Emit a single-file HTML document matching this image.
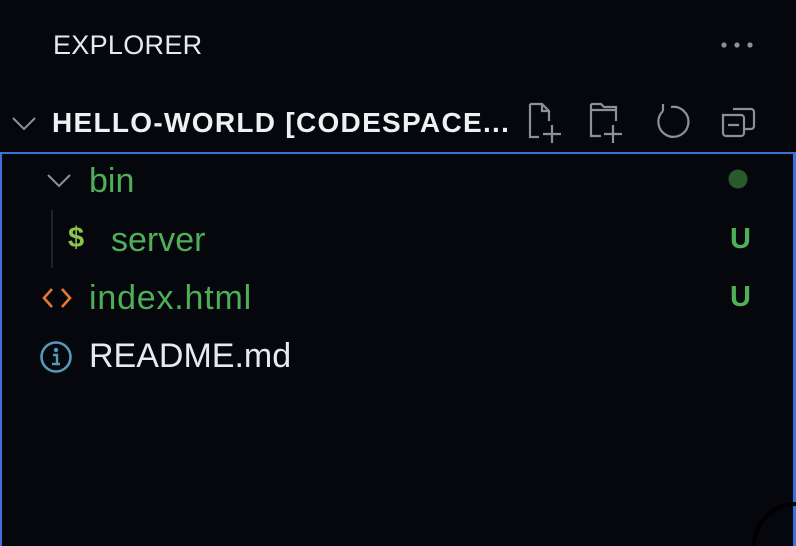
<!DOCTYPE html>
<html><head><meta charset="utf-8"><style>
html,body{margin:0;padding:0;width:796px;height:546px;overflow:hidden;background:#05070d;font-family:"Liberation Sans",sans-serif;}
.a{position:absolute;white-space:nowrap;}
</style></head><body>
<div class="a" style="left:53px;top:30px;font-size:27px;color:#e6e9ee;letter-spacing:0.3px;">EXPLORER</div>
<svg class="a" style="left:718px;top:38px" width="40" height="14"><circle cx="6" cy="7" r="2.6" fill="#8b9099"/><circle cx="19" cy="7" r="2.6" fill="#8b9099"/><circle cx="32" cy="7" r="2.6" fill="#8b9099"/></svg>
<svg class="a" style="left:10px;top:112px" width="30" height="24"><path d="M3 6 L14 17 L25 6" fill="none" stroke="#8b9099" stroke-width="2"/></svg>
<div class="a" style="left:52px;top:107px;font-size:28px;font-weight:bold;color:#eef0f3;letter-spacing:1.3px;">HELLO-WORLD [CODESPACE...</div>
<svg class="a" style="left:525px;top:100px" width="245" height="46" fill="none" stroke="#8b9099" stroke-width="2.2">
<path d="M5 4 H17 L24 11 V21 M24 11 H17 V4 M5 4 V37 H14"/>
<path d="M27 25 V43 M18 34 H36"/>
<path d="M66 4 H76 L79 7 H91 V21 M66 4 V36 H76 M66 10 H91"/>
<path d="M88 25 V43 M79 34 H97"/>
<path d="M138 11 A15 15 0 1 0 146 7 M138 11 L138 4"/>
<path d="M208 9 H226 A3 3 0 0 1 229 12 V26 A3 3 0 0 1 226 29 H220 M198 15 H216 A3 3 0 0 1 219 18 V33 A3 3 0 0 1 216 36 H201 A3 3 0 0 1 198 33 Z M203 25 H214"/>
</svg>
<div class="a" style="left:0;top:152px;width:796px;height:394px;box-sizing:border-box;border:2px solid #3b72d8;border-bottom:none;border-right-width:3px;"></div>
<svg class="a" style="left:46px;top:170px" width="28" height="20"><path d="M2 5 L13 16 L24 5" fill="none" stroke="#8b9099" stroke-width="2"/></svg>
<div class="a" style="left:89px;top:162px;font-size:34px;color:#4fae58;">bin</div>
<svg class="a" style="left:727px;top:168px" width="22" height="22"><circle cx="11" cy="11" r="9.5" fill="#2a5a2c"/></svg>
<div class="a" style="left:51px;top:210px;width:2px;height:58px;background:#1f2228;"></div>
<div class="a" style="left:68px;top:222px;font-size:29px;font-weight:bold;color:#8bc34a;">$</div>
<div class="a" style="left:111px;top:221px;font-size:34px;color:#4fae58;">server</div>
<div class="a" style="left:730px;top:223px;font-size:29px;font-weight:bold;color:#4fae58;">U</div>
<svg class="a" style="left:42px;top:286px" width="30" height="24"><path d="M10 3 L2 12 L10 21 M20 3 L28 12 L20 21" fill="none" stroke="#e37933" stroke-width="2.6"/></svg>
<div class="a" style="left:89px;top:279px;font-size:34px;color:#4fae58;letter-spacing:0.8px;">index.html</div>
<div class="a" style="left:730px;top:281px;font-size:29px;font-weight:bold;color:#4fae58;">U</div>
<svg class="a" style="left:39px;top:340px" width="34" height="34"><circle cx="17" cy="17" r="14.5" fill="none" stroke="#519aba" stroke-width="2.6"/><circle cx="17" cy="10" r="2.2" fill="#519aba"/><path d="M14 15 H18 V24 M13 24 H21" fill="none" stroke="#519aba" stroke-width="2.4"/></svg>
<div class="a" style="left:89px;top:337px;font-size:34px;color:#e6e9ee;">README.md</div>
<svg class="a" style="left:750px;top:500px" width="46" height="46"><circle cx="46" cy="46" r="42" fill="none" stroke="#000" stroke-width="4"/></svg>
</body></html>
